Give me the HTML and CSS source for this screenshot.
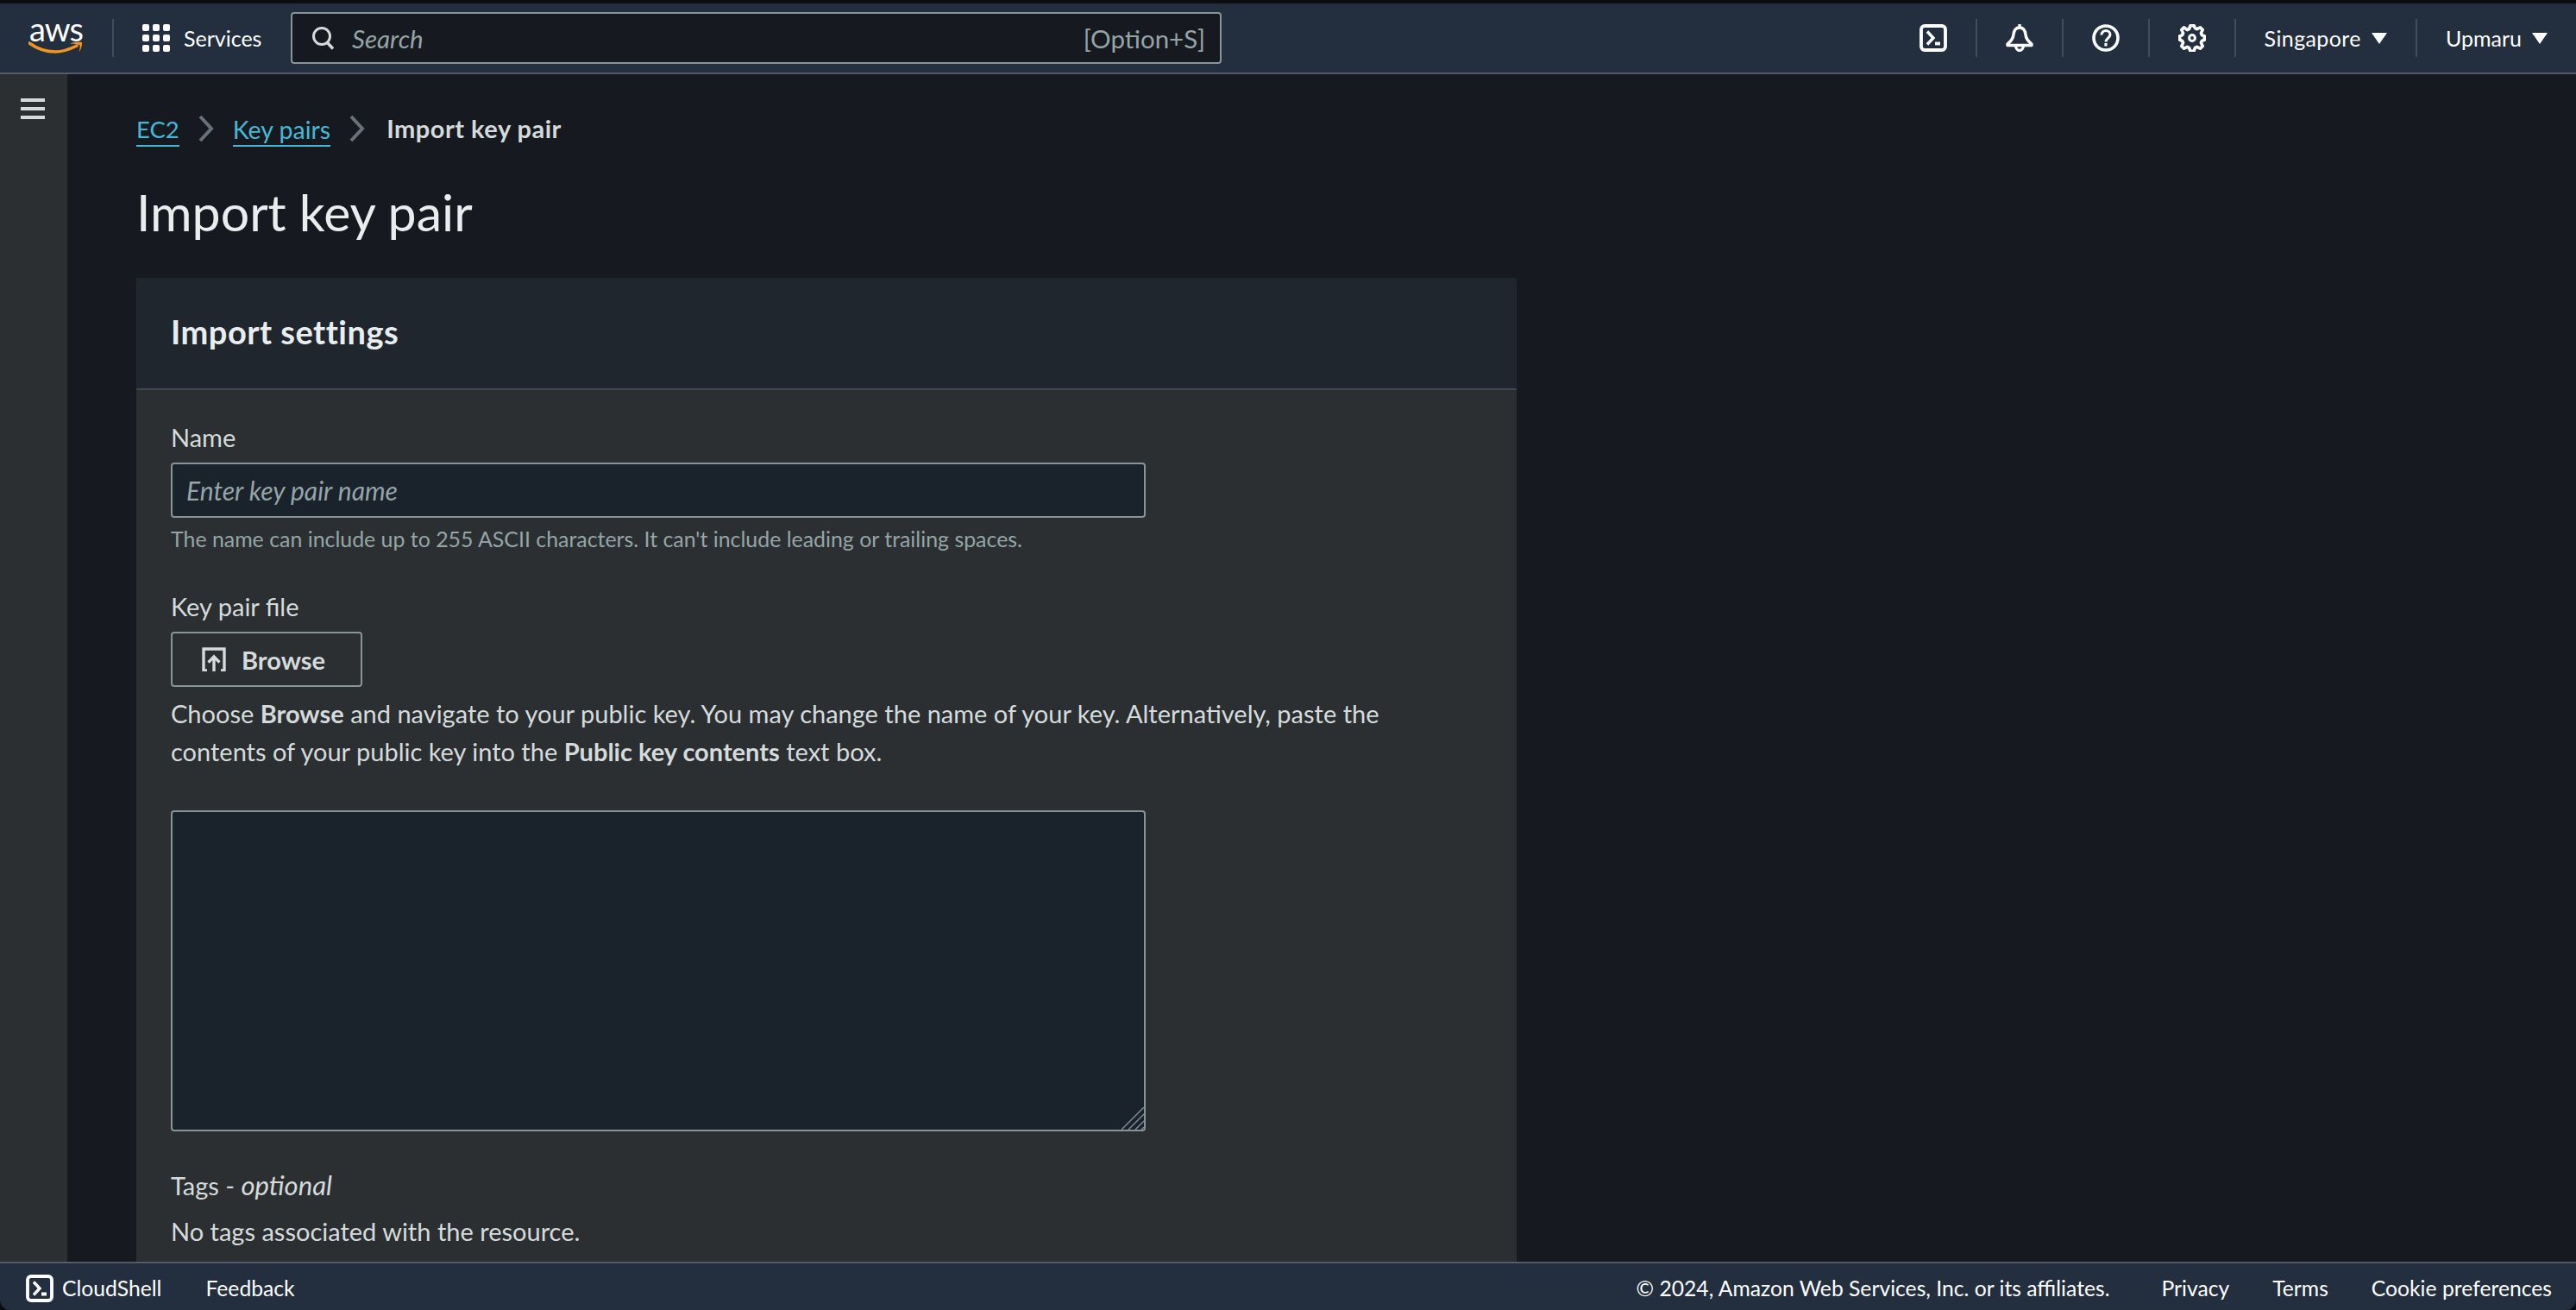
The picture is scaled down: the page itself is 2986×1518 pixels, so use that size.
FILE: index.html
```html
<!DOCTYPE html>
<html lang="en">
<head>
<meta charset="utf-8">
<title>Import key pair</title>
<link rel="stylesheet" href="styles.css">
</head>
<body>
<div class="app">
  <header class="nav">
    <div class="logo">
      <span class="logo-text">aws</span>
      <svg class="logo-smile" viewBox="0 0 64 16"><path d="M1 2c9 6.500 19 10 30 10 8 0 16-2.500 25-7" fill="none" stroke="#f0961e" stroke-width="3.600" stroke-linecap="round"/><path d="M48 2.500c4-1.500 9-2 14-1.500.500 3.500-.8 8-3.500 11.500 1-3.200 1.500-6 1-8.500-3-.8-7-1.300-11.500-1.500z" fill="#f0961e"/></svg>
    </div>
    <span class="sep sep-logo"></span>
    <div class="grid-icon"><i></i><i></i><i></i><i></i><i></i><i></i><i></i><i></i><i></i></div>
    <span class="services">Services</span>
    <label class="search">
      <svg class="search-icon" viewBox="0 0 28 28"><circle cx="12" cy="12" r="9.500" fill="none" stroke="#d5dbdb" stroke-width="3"/><path d="M18.500 19.500l6.500 7" stroke="#d5dbdb" stroke-width="3.400" fill="none"/></svg>
      <input class="search-input" type="text" placeholder="Search">
      <span class="search-hint">[Option+S]</span>
    </label>
    <div class="nav-right">
      <div class="cell"><svg class="icon" viewBox="0 0 32 32"><rect x="2" y="2" width="28" height="28" rx="4" fill="none" stroke="#fff" stroke-width="3.800"/><path d="M9 8.500l7 7.500-7 7.500" fill="none" stroke="#fff" stroke-width="3.400"/><path d="M18 22.500h6" stroke="#fff" stroke-width="3.800"/></svg></div>
      <span class="sep"></span>
      <div class="cell"><svg class="icon" viewBox="0 0 32 32"><path d="M16 4c-4.500 0-6.500 3.500-7 8-.4 4.500-2.500 7.500-7 11v1.500h28V23c-4.500-3.500-6.600-6.500-7-11-.5-4.500-2.500-8-7-8z" fill="none" stroke="#fff" stroke-width="3.400" stroke-linejoin="round"/><path d="M16 0v4" stroke="#fff" stroke-width="3.400"/><path d="M11.500 24.500c0 3 1.800 6 4.500 6s4.500-3 4.500-6" fill="none" stroke="#fff" stroke-width="3.400"/></svg></div>
      <span class="sep"></span>
      <div class="cell"><svg class="icon" viewBox="0 0 32 32"><ellipse cx="16" cy="16" rx="14" ry="14" fill="none" stroke="#fff" stroke-width="3.600"/><path d="M11 12.500c0-3 2.200-5 5-5s5 2 5 4.600c0 4-5 4-5 8.400" fill="none" stroke="#fff" stroke-width="3"/><path d="M16 22v3.500" stroke="#fff" stroke-width="3.200"/></svg></div>
      <span class="sep"></span>
      <div class="cell"><svg class="icon" viewBox="0 0 16 16"><path d="M13.200 5.200l.9-1.900-1.400-1.400-1.900.9c-.4-.2-.7-.3-1.100-.5L9 .8H7l-.7 2c-.4.1-.7.3-1.100.5L3.300 1.900 1.900 3.300l.9 1.900c-.2.4-.3.7-.5 1.100L.8 7v2l1.500.7c.2.4.3.7.5 1.100l-.9 1.900 1.400 1.400 1.900-.9c.4.2.7.3 1.100.5l.7 2h2l.7-2c.4-.2.7-.3 1.100-.5l1.900.9 1.400-1.400-.9-1.900c.2-.4.3-.7.5-1.100l1.500-.7V7l-1.500-.7c-.2-.4-.3-.7-.5-1.100z" fill="none" stroke="#fff" stroke-width="1.800" stroke-linejoin="round"/><circle cx="8" cy="8" r="1.700" fill="none" stroke="#fff" stroke-width="1.500"/></svg></div>
      <span class="sep"></span>
      <div class="cell menu menu-region"><span>Singapore</span><svg class="caret" viewBox="0 0 18 14"><path d="M0 1h18L9 14z" fill="#fff"/></svg></div>
      <span class="sep"></span>
      <div class="cell menu"><span>Upmaru</span><svg class="caret" viewBox="0 0 18 14"><path d="M0 1h18L9 14z" fill="#fff"/></svg></div>
    </div>
  </header>

  <div class="body-row">
    <aside class="sidebar">
      <div class="hamburger"><i></i><i></i><i></i></div>
    </aside>
    <main class="main">
      <nav class="crumbs">
        <a class="crumb-link crumb-ec2" href="#">EC2</a>
        <svg class="chev" viewBox="0 0 20 30"><path d="M3 1l13 14L3 29" fill="none" stroke="#687078" stroke-width="4"/></svg>
        <a class="crumb-link" href="#">Key pairs</a>
        <svg class="chev" viewBox="0 0 20 30"><path d="M3 1l13 14L3 29" fill="none" stroke="#687078" stroke-width="4"/></svg>
        <span class="crumb-current">Import key pair</span>
      </nav>
      <h1 class="title">Import key pair</h1>
      <section class="card">
        <div class="card-head"><h2 class="card-title">Import settings</h2></div>
        <div class="card-body">
          <div class="label label-first">Name</div>
          <input class="field" type="text" placeholder="Enter key pair name">
          <div class="hint">The name can include up to 255 ASCII characters. It can't include leading or trailing spaces.</div>
          <div class="label label-file">Key pair file</div>
          <button class="browse" type="button">
            <svg class="browse-icon" viewBox="0 0 28 28"><path d="M6 27H2V2h24v25h-4" fill="none" stroke="#d5dbdb" stroke-width="3.400"/><path d="M14 28V11M7.500 17.500L14 11l6.500 6.500" fill="none" stroke="#d5dbdb" stroke-width="3.400"/></svg>
            <span>Browse</span>
          </button>
          <p class="desc">Choose <b>Browse</b> and navigate to your public key. You may change the name of your key. Alternatively, paste the<br>contents of your public key into the <b>Public key contents</b> text box.</p>
          <div class="area-wrap">
            <textarea class="area"></textarea>
            <svg class="grip" viewBox="0 0 26 26"><path d="M0 26L26 0M8 26L26 8M16 26L26 16M23 26l3-3" fill="none" stroke="#7d8998" stroke-width="1.500"/></svg>
          </div>
          <div class="label label-tags">Tags - <em>optional</em></div>
          <div class="label no-tags">No tags associated with the resource.</div>
        </div>
      </section>
    </main>
  </div>

  <footer class="footer">
    <svg class="foot-icon" viewBox="0 0 32 32"><rect x="2" y="2" width="28" height="28" rx="4" fill="none" stroke="#fff" stroke-width="3.800"/><path d="M9 8.500l7 7.500-7 7.500" fill="none" stroke="#fff" stroke-width="3.400"/><path d="M18 22.500h6" stroke="#fff" stroke-width="3.800"/></svg>
    <span class="foot-cloud">CloudShell</span>
    <span class="foot-feedback">Feedback</span>
    <div class="foot-right">
      <span class="copy">© 2024, Amazon Web Services, Inc. or its affiliates.</span>
      <span>Privacy</span>
      <span>Terms</span>
      <span>Cookie preferences</span>
    </div>
  </footer>
</div>
</body>
</html>
```

FILE: styles.css
```css
* { box-sizing: border-box; }
html, body { margin: 0; height: 100%; background: #0c0d10; overflow: hidden; }
body { font-family: "Lato", "Open Sans", sans-serif; color: #d5dbdb; }
.app {
  height: 100vh; display: flex; flex-direction: column; padding-top: 4px;
  border-radius: 0 0 12px 12px; overflow: hidden;
}
.nav {
  height: 82px; flex: none; display: flex; align-items: center;
  background: #232f3e; border-bottom: 2px solid #545b64; padding-left: 33px;
  color: #fff; font-size: 25px;
}
.logo { width: 64px; height: 40px; position: relative; flex: none; }
.logo-text { display: block; font-size: 38px; line-height: 30px; color: #fff; text-align: center; letter-spacing: -1px; margin-top: -6px; }
.logo-smile { position: absolute; left: 0; top: 24px; width: 64px; height: 16px; }
.sep { width: 2px; height: 44px; background: #414d5c; flex: none; display: block; }
.sep-logo { margin-left: 33px; margin-right: 33px; }
.grid-icon { display: grid; grid-template-columns: repeat(3, 8px); grid-auto-rows: 8px; gap: 4px; flex: none; }
.grid-icon i { background: #fff; border-radius: 2px; }
.services { margin-left: 16px; width: 124px; flex: none; }
.search {
  width: 1079px; height: 60px; flex: none; display: flex; align-items: center;
  background: #16191f; border: 2px solid #879596; border-radius: 4px; padding: 0 17px 0 22px;
}
.search-icon { width: 28px; height: 28px; flex: none; }
.search-input {
  flex: 1; min-width: 0; background: none; border: 0; outline: 0; margin-left: 19px; padding: 0;
  font: italic 29.5px "Lato", sans-serif; color: #95a5a6;
}
.search-input::placeholder { color: #95a5a6; opacity: 1; }
.search-hint { font-size: 29.5px; color: #95a5a6; }
.nav-right { margin-left: auto; display: flex; align-items: center; }
.cell { padding: 0 33px; display: flex; align-items: center; flex: none; }
.icon { width: 32px; height: 32px; display: block; }
.menu { gap: 12px; font-size: 25px; }
.menu-region span { letter-spacing: .4px; }
.caret { width: 18px; height: 14px; flex: none; }
.body-row { flex: 1; min-height: 0; display: flex; }
.sidebar { width: 78px; flex: none; background: #2b2f32; padding: 28px 0 0 24px; }
.hamburger { width: 28px; display: flex; flex-direction: column; gap: 6px; }
.hamburger i { height: 4px; background: #d5dbdb; display: block; }
.main { flex: 1; min-width: 0; background: #16191f; padding: 41px 0 0 80px; overflow: hidden; }
.crumbs { display: flex; align-items: center; height: 44px; font-size: 28.5px; }
.crumb-link { color: #44b9d6; text-decoration: none; border-bottom: 2px solid #44b9d6; line-height: 36px; margin-top: 3px; }
.crumb-ec2 { font-size: 27.5px; }
.chev { width: 20px; height: 30px; margin: 0 21px; flex: none; }
.crumb-current { font-weight: 700; color: #d5dbdb; font-size: 29px; letter-spacing: .5px; margin-left: 3px; margin-top: -2px; }
.title { margin: 39px 0 40px; font-size: 59px; line-height: 72px; font-weight: 400; color: #eaeded; }
.card { width: 1600px; background: #2b2f32; }
.card-head { background: #1f262d; height: 130px; padding: 40px 40px 0; border-bottom: 2px solid #414750; }
.card-title { margin: 0; font-size: 38px; line-height: 44px; font-weight: 700; color: #eaeded; letter-spacing: .5px; }
.card-body { padding: 33px 40px 40px; }
.label { font-size: 29px; line-height: 44px; color: #d5dbdb; }
.label em { font-size: 31px; }
.field {
  display: block; width: 1130px; height: 64px; margin-top: 7px; padding: 0 16px;
  background: #1a222c; border: 2px solid #879596; border-radius: 4px; outline: 0;
  font: italic 30px "Lato", sans-serif; color: #d5dbdb;
}
.field::placeholder { color: #95a5a6; opacity: 1; }
.hint { margin-top: 6px; font-size: 24.9px; line-height: 36px; color: #95a5a6; }
.label-file { margin-top: 39px; }
.browse {
  display: flex; align-items: center; width: 222px; height: 64px; margin-top: 7px; padding: 0 0 0 34px; gap: 18px;
  background: none; border: 2px solid #879596; border-radius: 4px;
  font: 700 29px "Lato", sans-serif; color: #d5dbdb;
}
.browse-icon { width: 28px; height: 28px; flex: none; }
.desc { margin: 9px 0 0; font-size: 29px; line-height: 44px; color: #d5dbdb; }
.area-wrap { position: relative; width: 1130px; margin-top: 46px; }
.area {
  display: block; width: 100%; height: 372px; padding: 8px 16px; resize: none;
  background: #1a222c; border: 2px solid #879596; border-radius: 4px; outline: 0; color: #d5dbdb;
}
.grip { position: absolute; right: 2px; bottom: 2px; width: 26px; height: 26px; }
.label-tags { margin-top: 40px; }
.no-tags { margin-top: 9px; }
.footer {
  height: 56px; flex: none; display: flex; align-items: center; padding: 3px 28px 0 30px;
  background: #232f3e; border-top: 2px solid #545b64; color: #fff; font-size: 24.7px;
}
.foot-icon { width: 32px; height: 32px; flex: none; }
.foot-cloud { margin-left: 10px; }
.foot-feedback { margin-left: 51px; }
.foot-right { margin-left: auto; display: flex; gap: 50px; }
.copy { margin-right: 10px; }
```
